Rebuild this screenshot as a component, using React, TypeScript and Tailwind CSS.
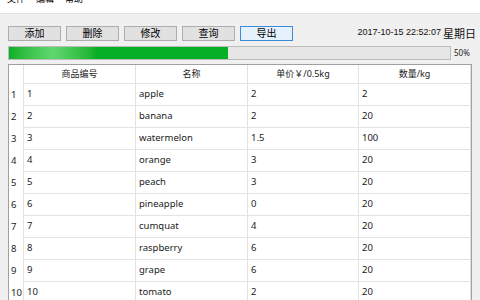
const rows = [
  ["1", "apple", "2", "2"],
  ["2", "banana", "2", "20"],
  ["3", "watermelon", "1.5", "100"],
  ["4", "orange", "3", "20"],
  ["5", "peach", "3", "20"],
  ["6", "pineapple", "0", "20"],
  ["7", "cumquat", "4", "20"],
  ["8", "raspberry", "6", "20"],
  ["9", "grape", "6", "20"],
  ["10", "tomato", "2", "20"],
];

const buttons = ["添加", "删除", "修改", "查询", "导出"];

const cell = "h-[22px] border-b border-r border-[#e3e3e3] pl-[3px] flex items-center";

export default function App() {
  return (
    <div
      className="w-[480px] h-[300px] overflow-hidden bg-[#f0f0f0] text-black"
      style={{ fontFamily: '"Noto Sans", "Noto Sans CJK SC", sans-serif' }}
    >
      {/* menu bar, mostly scrolled off the top */}
      <div className="h-[14px] bg-white border-b border-[#e3e3e3] overflow-hidden">
        <div className="flex gap-[11px] pl-[7px] -mt-[6px] text-[9px] leading-[10px]">
          <span>文件</span>
          <span>编辑</span>
          <span>帮助</span>
        </div>
      </div>

      {/* toolbar */}
      <div className="flex items-center pl-[8px] pr-[4px] mt-[11px] h-[16px]">
        <div className="flex gap-[5px]">
          {buttons.map((b, i) => (
            <div
              key={b}
              className={
                "w-[53px] h-[15px] flex items-center justify-center text-[10px] leading-none border " +
                (i === 4 ? "bg-[#e5f1fb] border-[#3c8bd8]" : "bg-[#e1e1e1] border-[#adadad]")
              }
            >
              {b}
            </div>
          ))}
        </div>
        <div className="ml-auto flex items-center gap-[2px] text-[#111]">
          <span className="text-[9px]" style={{ fontFamily: '"Liberation Sans", sans-serif' }}>
            2017-10-15 22:52:07
          </span>
          <span className="text-[11px]" style={{ fontFamily: '"Noto Sans CJK SC", sans-serif' }}>星期日</span>
        </div>
      </div>

      {/* progress */}
      <div className="flex items-center pl-[8px] mt-[5px]">
        <div className="w-[443px] h-[14px] bg-[#e6e6e6] border border-[#bcbcbc] flex">
          <div className="w-[219px] h-full bg-gradient-to-r from-[#06b025] via-[#5fd86f] to-[#06b025] bg-[length:40%_100%] bg-no-repeat bg-[#06b025]" />
        </div>
        <span className="ml-[3px] text-[8px] text-[#222]">50%</span>
      </div>

      {/* table */}
      <div className="ml-[8px] mt-[4px] w-[464px] bg-white border border-[#a0a0a0] text-[9.5px] text-[#1a1a1a]">
        <div className="grid grid-cols-[15px_112px_112px_111px_1fr]">
          <div className="h-[19px] border-r border-[#e3e3e3]" />
          {["商品编号", "名称", "单价￥/0.5kg", "数量/kg"].map((h) => (
            <div key={h} className="h-[19px] border-r border-b border-[#e3e3e3] flex items-center justify-center text-[9px]">
              {h}
            </div>
          ))}
          {rows.map((r, i) => (
            <div key={i} className="contents">
              <div className="h-[22px] border-r border-[#e3e3e3] pl-[2px] flex items-center">{i + 1}</div>
              {r.map((c, j) => (
                <div key={j} className={cell}>
                  {c}
                </div>
              ))}
            </div>
          ))}
        </div>
      </div>
    </div>
  );
}
